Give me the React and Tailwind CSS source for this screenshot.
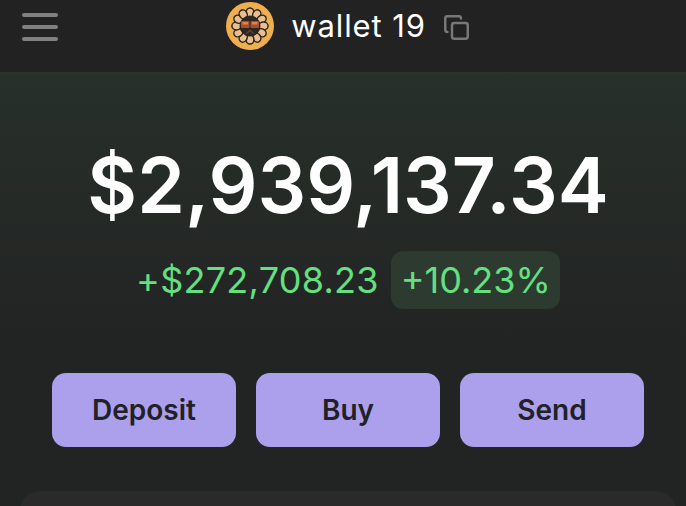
import { Copy } from 'lucide-react';

// Sunflower avatar, petals drawn around a dark middle
const Avatar = () => {
    const petals = Array.from({ length: 12 }).map((_, i) => i * 30);
    return (
        <svg width="48" height="48" viewBox="0 0 48 48" className="shrink-0">
            <circle cx="24" cy="24" r="24" fill="#eeb04e" />
            {petals.map((a) => (
                <g key={a} transform={`rotate(${a} 24 24)`}>
                    <ellipse cx="24" cy="10.5" rx="3.9" ry="4.6" fill="#e9bf8e" stroke="#2e2622" strokeWidth="1.5" />
                </g>
            ))}
            <circle cx="24" cy="24" r="10.5" fill="#2e2622" />
            <rect x="15" y="19" width="8.5" height="7" rx="1" fill="#a94f28" />
            <rect x="24.5" y="19" width="8.5" height="7" rx="1" fill="#a94f28" />
            <rect x="16.5" y="20" width="5.5" height="2.5" fill="#d98450" />
            <rect x="26" y="20" width="5.5" height="2.5" fill="#d98450" />
            <path d="M20.5 31.5 L24 28.5 L27.5 31.5" fill="none" stroke="#5a463a" strokeWidth="1.4" />
        </svg>
    );
};

const ActionButton = ({ label }) => (
    <button className="h-[74px] w-[184px] rounded-[14px] bg-[#ac9fec] text-[28px] font-semibold text-[#212126]">
        {label}
    </button>
);

export default function App() {
    return (
        <div className="h-[506px] w-[686px] overflow-hidden bg-[#222323]">
            <div className="w-[696px] text-white font-['Inter',sans-serif]">
                <header className="relative flex h-[74px] items-start justify-center border-b-2 border-[#2e3130] bg-[#222222] pt-[2px]">
                    <div className="absolute left-[22px] top-[13px] flex w-[36px] flex-col gap-[8px]">
                        <span className="h-[4px] rounded-full bg-[#808080]" />
                        <span className="h-[4px] rounded-full bg-[#808080]" />
                        <span className="h-[4px] rounded-full bg-[#808080]" />
                    </div>
                    <div className="flex items-center">
                        <Avatar />
                        <span className="ml-[17px] text-[31px] tracking-[0.9px] leading-[48px]">wallet 19</span>
                        <Copy className="ml-[17px] mt-[2px] text-[#787878]" size={27} strokeWidth={2.2} />
                    </div>
                </header>
                <section className="flex flex-col items-center bg-gradient-to-b from-[#27302a] to-[#222323] pt-[72px] pb-[44px]">
                    <div className="text-[76.6px] font-semibold leading-[78px]">$2,939,137.34</div>
                    <div className="mt-[27px] flex items-center gap-[12px] text-[36px] text-[#64e080]">
                        <span className="tracking-[0.25px]">+$272,708.23</span>
                        <span className="rounded-[12px] bg-[#2c3a30] pl-[10px] pr-[9px] py-[9px] leading-[40px]">+10.23%</span>
                    </div>
                </section>
                <div className="flex justify-center gap-[20px] pt-[20px]">
                    <ActionButton label="Deposit" />
                    <ActionButton label="Buy" />
                    <ActionButton label="Send" />
                </div>
                <div className="mx-[20px] mt-[44px] h-[60px] rounded-[20px] bg-[#2a2a2a]" />
            </div>
        </div>
    );
}
